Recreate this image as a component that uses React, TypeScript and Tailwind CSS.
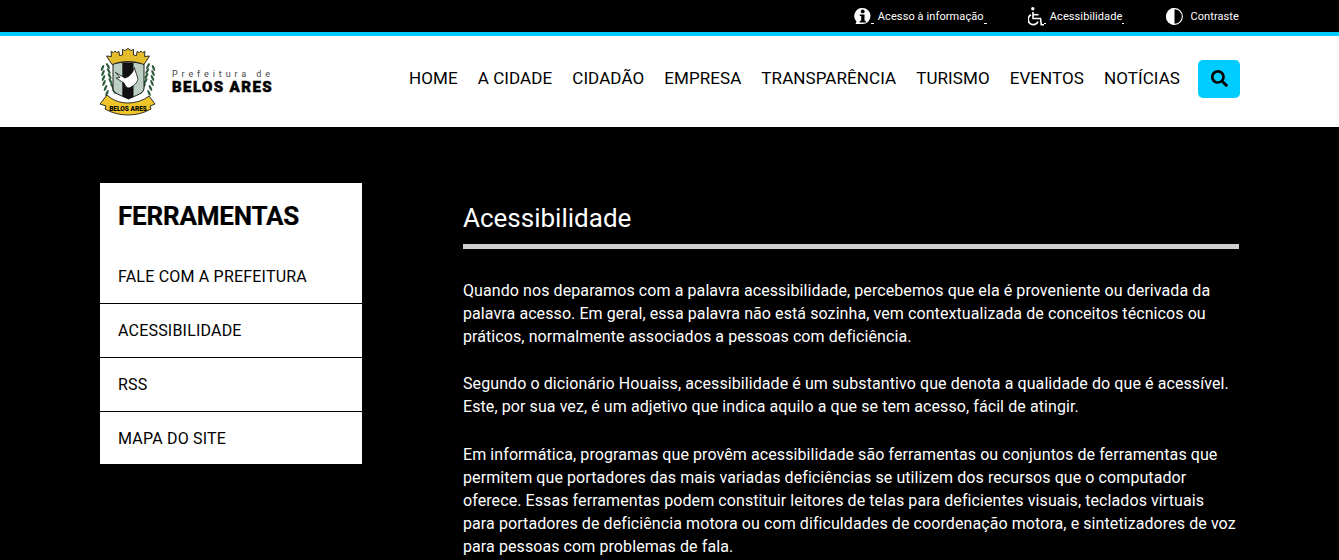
import { FaSearch } from "react-icons/fa";

const navItems = ["HOME", "A CIDADE", "CIDADÃO", "EMPRESA", "TRANSPARÊNCIA", "TURISMO", "EVENTOS", "NOTÍCIAS"];
const leaves = [0, 1, 2, 3, 4, 5];

function InfoIcon() {
  return (
    <svg viewBox="0 0 17 16" className="w-[17px] h-[16px]">
      <path d="M8.500 0a8 8 0 0 1 0 16H1.500l1-2.500A8 8 0 0 1 8.500 0z" fill="#fff" />
      <circle cx="8.700" cy="3.400" r="1.900" fill="#000" />
      <path d="M5.800 6.400h4.700v6.300h1.300v1.700H5.800v-1.700h1.400V8.100H5.800z" fill="#000" />
    </svg>
  );
}

function WheelchairIcon() {
  return (
    <svg viewBox="0 0 16 19" className="w-[16px] h-[19px]" fill="none" stroke="#fff" strokeWidth="1.600">
      <circle cx="4.800" cy="1.800" r="1.700" fill="#fff" stroke="none" />
      <path d="M5 5v6.500h7.500l.8 6.200H16" />
      <path d="M5 7.700h5.500" />
      <path d="M3 7.800c-3.300 1.500-3.400 6-1.500 8.200 2.200 2.500 7 2.300 8.500-1.500" />
    </svg>
  );
}

function ContrastIcon() {
  return (
    <svg viewBox="0 0 18 18" className="w-[17px] h-[17px]">
      <circle cx="9" cy="9" r="8.300" fill="#000" stroke="#fff" strokeWidth="1.200" />
      <path d="M9 0a9 9 0 0 0 0 18z" fill="#fff" />
    </svg>
  );
}

function Crest() {
  return (
    <svg viewBox="0 0 58 68" className="w-[58px] h-[68px]">
      {/* laurel */}
      <g fill="#2f5c3c">
        {leaves.map((i) => {
          const drift = i > 3 ? i - 3 : 0;
          const outer = 2.500 + i * 0.5 + drift;
          const inner = 8 + i * 0.8 + drift;
          const y = 18 + i * 5;
          return (
            <g key={i}>
              <ellipse cx={outer} cy={y + 2} rx="1.200" ry="3.200" transform={`rotate(25 ${outer} ${y + 2})`} />
              <ellipse cx={inner} cy={y} rx="1.200" ry="3.200" transform={`rotate(-30 ${inner} ${y})`} />
              <ellipse cx={56 - outer} cy={y + 2} rx="1.200" ry="3.200" transform={`rotate(-25 ${56 - outer} ${y + 2})`} />
              <ellipse cx={56 - inner} cy={y} rx="1.200" ry="3.200" transform={`rotate(30 ${56 - inner} ${y})`} />
            </g>
          );
        })}
      </g>
      {/* shield */}
      <path d="M13 16c9-2.500 21-2.500 31 0v24c0 6-8 7-15.500 11C21 47 13 46 13 40z" fill="#bccfc3" stroke="#1c1c1c" strokeWidth="1" />
      <path d="M22.300 14.800h11.200V49l-5 2-6.200-2.500z" fill="#111" />
      {/* swallow */}
      <path d="M34.500 19.500c-1.500 5.500-5.500 9.500-9.500 10.500l-9.500-5.500 4.500 5-4 .5 8 5c1 3 3 5 5 5 5-2 8-5 9-9-1-4-3-8-3.500-11.500z" fill="#fff" stroke="#111" strokeWidth=".800" />
      {/* crown */}
      <path d="M6.500 8l5 .5-.5-5 2.500 1L15 3l1.500 1.500 2.500-1 .5 4 3-.5V1.500l2.500 1 3-2 3 2 2.500-1V7l3 .5.5-4 2.500 1L41 3l1.500 1.500 2.500-1-.5 5 5-.5-5.500 8.500c-10-4-22-4-32 0z" fill="#e5bd2c" stroke="#1c1c1c" strokeWidth=".900" />
      {/* banner */}
      <path d="M7 47c5 5 13 8 21 8s16-3 21-7l6 8-5 2 1 3c-7 4-15 6-23 6S12 65 5 61l1-3-6-2z" fill="#efc52b" stroke="#1c1c1c" strokeWidth=".900" />
      <text x="28" y="63" textAnchor="middle" fontFamily="Roboto, sans-serif" fontWeight="900" fontSize="6.500" fill="#000">BELOS ARES</text>
    </svg>
  );
}

function Dash({ w }: { w: string }) {
  return <span className={"self-end mb-[8px] h-px bg-white " + w} />;
}

export default function App() {
  return (
    <div className="h-[560px] overflow-hidden bg-black text-white font-['Roboto',sans-serif]">
      <div className="h-[36px] border-b-4 border-[#00ccff] flex justify-end items-center pr-[100px] text-[11px] tracking-[0.1px]">
        <a className="flex items-center h-full">
          <InfoIcon />
          <Dash w="w-[3px]" />
          <span className="ml-[4px] mt-[3px]">Acesso à informação</span>
          <Dash w="w-[3px]" />
        </a>
        <a className="flex items-center h-full ml-[41px]">
          <WheelchairIcon />
          <Dash w="w-[2px]" />
          <span className="ml-[4px] mt-[3px]">Acessibilidade</span>
          <Dash w="w-[2px]" />
        </a>
        <a className="flex items-center gap-[7px] h-full ml-[42px]">
          <ContrastIcon />
          <span className="mt-[3px]">Contraste</span>
        </a>
      </div>

      <header className="h-[91px] bg-white text-black flex items-center justify-between pl-[100px] pr-[99px]">
        <div className="flex items-center gap-[14px]">
          <Crest />
          <div className="flex flex-col mt-[1px]">
            <span className="text-[9px] leading-[10px] tracking-[3.900px] text-[#444]">Prefeitura de</span>
            <span className="text-[15px] leading-[17px] font-black tracking-[1.400px] [-webkit-text-stroke:0.5px_#000]">BELOS ARES</span>
          </div>
        </div>
        <nav className="flex items-center gap-[20px] text-[17px] tracking-[0.080px] mb-[6px]">
          {navItems.map((item) => (
            <a key={item}>{item}</a>
          ))}
          <button className="ml-[-2px] w-[42px] h-[38px] rounded-[5px] bg-[#00ccff] flex items-center justify-center">
            <FaSearch size={17} />
          </button>
        </nav>
      </header>

      <main className="flex pl-[100px] pr-[100px] pt-[56px] gap-[101px]">
        <aside className="w-[262px] shrink-0 bg-white text-black self-start text-[16px] leading-[24px] tracking-[0.200px]">
          <h2 className="text-[26px] leading-[30px] font-bold tracking-[-0.200px] [-webkit-text-stroke:0.2px_#000] px-[18px] pt-[18px] pb-[18px]">FERRAMENTAS</h2>
          <a className="block h-[55px] px-[18px] pt-[16px] border-b border-black">FALE COM A PREFEITURA</a>
          <a className="block h-[54px] px-[18px] pt-[15px] border-b border-black">ACESSIBILIDADE</a>
          <a className="block h-[54px] px-[18px] pt-[15px] border-b border-black">RSS</a>
          <a className="block h-[52px] px-[18px] pt-[15px]">MAPA DO SITE</a>
        </aside>

        <article className="flex-1 text-[16px] leading-[23px] tracking-[0.085px]">
          <h1 className="text-[26px] leading-[30px] tracking-normal pt-[20px] pb-[11px] border-b-[5px] border-[#d0d0d0]">Acessibilidade</h1>
          <p className="mt-[30px]">
            Quando nos deparamos com a palavra acessibilidade, percebemos que ela é proveniente ou derivada da palavra acesso. Em geral, essa palavra não está sozinha, vem contextualizada de conceitos técnicos ou práticos, normalmente associados a pessoas com deficiência.
          </p>
          <p className="mt-[24px]">
            Segundo o dicionário Houaiss, acessibilidade é um substantivo que denota a qualidade do que é acessível. Este, por sua vez, é um adjetivo que indica aquilo a que se tem acesso, fácil de atingir.
          </p>
          <p className="mt-[25px]">
            Em informática, programas que provêm acessibilidade são ferramentas ou conjuntos de ferramentas que permitem que portadores das mais variadas deficiências se utilizem dos recursos que o computador oferece. Essas ferramentas podem constituir leitores de telas para deficientes visuais, teclados virtuais para portadores de deficiência motora ou com dificuldades de coordenação motora, e sintetizadores de voz para pessoas com problemas de fala.
          </p>
        </article>
      </main>
    </div>
  );
}
